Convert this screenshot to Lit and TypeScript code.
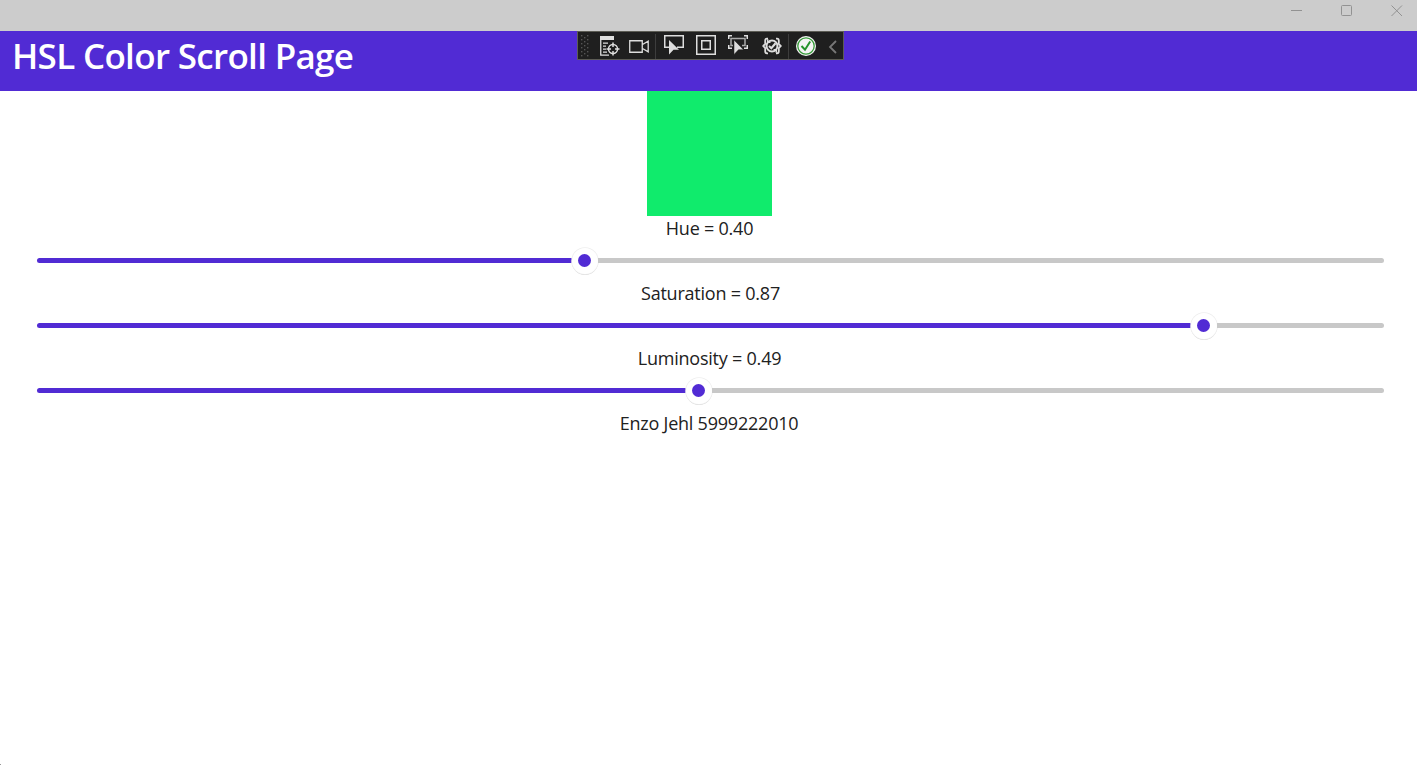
import { LitElement, html, css, svg } from "lit";
import { customElement, property } from "lit/decorators.js";

@customElement("hsl-slider")
class HslSlider extends LitElement {
  @property({ type: Number }) filled = 0;

  static styles = css`
    :host { display: flex; height: 40px; padding: 0 33px 0 37px; box-sizing: border-box; }
    .track { display: flex; align-items: center; width: 100%; height: 39px; }
    .fill { flex: none; height: 5px; border-radius: 2.5px 1px 1px 2.5px; background: #512bd4; }
    .rest { flex: 1; height: 5px; border-radius: 0 2.5px 2.5px 0; background: #c8c8c8; }
    .thumb { flex: none; width: 26px; height: 26px; border-radius: 50%; background: #fff; display: flex; align-items: center; justify-content: center; box-shadow: 0 0 0 0.8px #eeeeee, 0 1px 0 0 #d0d0d0; }
    .dot { width: 13px; height: 13px; border-radius: 50%; background: #512bd4; margin-right: 1px; }
  `;

  render() {
    return html`<div class="track">
      <div class="fill" style="width:${this.filled}px"></div>
      <div class="thumb"><div class="dot"></div></div>
      <div class="rest"></div>
    </div>`;
  }
}

@customElement("debug-toolbar")
class DebugToolbar extends LitElement {
  static styles = css`
    :host { display: flex; box-sizing: border-box; width: 267px; height: 29px; background: #1f1f1f; border: 1px solid #5c5c55; }
    svg { display: block; flex: none; fill: none; stroke: #dedede; stroke-width: 1.5; margin-top: 4px; }
    .grip { margin: 2px 11px 0 3px; stroke: none; fill: #555; }
    .camera { margin-left: 9px; }
    .sep { width: 1px; height: 25px; margin-top: 2px; background: #3d3d3d; }
    .first { margin-left: 6px; }
    .last { margin-left: 6px; }
    .pick, .frame, .track { margin-top: 3px; }
    .pick { margin-left: 8px; }
    .frame, .track { margin-left: 12px; }
    .reload { margin-left: 14px; }
    .ok { margin-left: 7px; }
    .chev { margin-left: 12px; stroke: #777; }
  `;

  render() {
    const dots = [];
    for (let row = 0; row < 6; row++) {
      dots.push(svg`<rect x="0" y=${row * 4 + 1} width="1.4" height="1.4"/><rect x="6" y=${row * 4 + 1} width="1.4" height="1.4"/>`);
      if (row < 5) dots.push(svg`<rect x="3" y=${row * 4 + 3} width="1.4" height="1.4"/>`);
    }
    return html`
      <svg class="grip" width="8" height="24">${dots}</svg>
      <svg class="tree" width="20" height="20" viewBox="0 0 20 20">
        <path d="M0 0H14V4H0Z" fill="#dedede" stroke="none"/>
        <path d="M.75 3V19.2H9M3 7.2H8M3 10.2H6M3 13.2H6M3 16.2H7" stroke-width="1.3"/>
        <circle cx="13" cy="13" r="4.5"/><path d="M13 6.5V11M13 15V19.5M6.5 13H11M15 13H19.5"/>
      </svg>
      <svg class="camera" width="20" height="20" viewBox="0 0 20 20">
        <path d="M.75 4.75H13.25V16.25H.75ZM13.5 8.5L19.2 5.2V15.8L13.5 12.5" stroke-width="1.3"/>
      </svg>
      <div class="sep first"></div>
      <svg class="pick" width="20" height="20" viewBox="0 0 20 20">
        <path d="M5 12.25H.75V.75H19.25V12.25H13"/>
        <path d="M5 5L15 14.7H9.5L5 19.5Z" fill="#dedede" stroke="none"/>
      </svg>
      <svg class="frame" width="20" height="20" viewBox="0 0 20 20">
        <path d="M.75 .75H19.25V19.25H.75ZM5.75 5.75H14.25V14.25H5.75Z"/>
      </svg>
      <svg class="track" width="20" height="20" viewBox="0 0 20 20">
        <path d="M.75 4V.75H4M16 .75H19.25V4M.75 10V13.25H4M19.25 10V13.25H16"/>
        <path d="M5 10.5H3V3.5H17V10.5H14" stroke="#aaa"/>
        <path d="M6 5L15.5 14.7H10.5L6 19.5Z" fill="#dedede" stroke="#1f1f1f" stroke-width=".5"/>
      </svg>
      <svg class="reload" width="20" height="20" viewBox="0 0 20 20">
        <path d="M6 2.7H5Q3.2 2.7 3.2 4.7V8L1.2 10L3.2 12V15.3Q3.2 17.3 5 17.3H6M14 2.7H15Q16.8 2.7 16.8 4.7V8L18.8 10L16.8 12V15.3Q16.8 17.3 15 17.3H14" stroke-width="1.8"/>
        <circle cx="10" cy="10" r="5.5" stroke-width="2"/>
        <path d="M7 10L9.3 12.2L13.6 7.2" stroke-width="2.1"/>
        <path d="M5.7 3.2V6.2H8.5M14.3 16.8V13.8H11.5" stroke-width="1.5"/>
      </svg>
      <div class="sep last"></div>
      <svg class="ok" width="20" height="20" viewBox="0 0 20 20">
        <circle cx="10" cy="10" r="10" fill="#f4f4f4" stroke="none"/>
        <circle cx="10" cy="10" r="8.2" stroke="#379b3a" stroke-width="1.3"/>
        <path d="M5.5 10L9 13.7L14.2 5.5" stroke="#25932b" stroke-width="2"/>
      </svg>
      <svg class="chev" width="9" height="20" viewBox="0 0 9 20"><path d="M8 5L2 11L8 17" stroke-width="1.8"/></svg>
    `;
  }
}

@customElement("app-root")
class AppRoot extends LitElement {
  static styles = css`
    :host { display: flex; flex-direction: column; position: relative; height: 765px; overflow: hidden; background: #fff; font-family: "Open Sans", "Noto Sans", sans-serif; color: #212121; }
    .titlebar { display: flex; justify-content: flex-end; flex: none; height: 31px; box-sizing: border-box; padding: 5px 14px 0 0; gap: 38px; background: #ccc; }
    .titlebar svg { width: 12px; height: 12px; fill: none; stroke: #929292; }
    .header { flex: none; height: 60px; box-sizing: border-box; padding-left: 12px; background: #512bd4; color: #fff; }
    h1 { margin: 0; font-size: 35px; line-height: 50px; font-weight: 600; letter-spacing: -0.68px; white-space: nowrap; }
    .tools { position: absolute; left: 577px; top: 31px; }
    .swatch { flex: none; align-self: center; width: 125px; height: 125px; margin-left: 2px; background: #10eb6c; }
    .label { flex: none; height: 25px; line-height: 25px; font-size: 18px; letter-spacing: -0.22px; text-align: center; padding-left: 2px; white-space: nowrap; }
    .label.saturation { padding-left: 4px; }
    .label.author { padding-left: 1px; }
    .corner { width: 1px; height: 1px; margin-top: auto; background: #999; }
  `;

  render() {
    return html`
      <div class="titlebar">
        <svg viewBox="0 0 12 12"><path d="M0 5.5H11"/></svg>
        <svg viewBox="0 0 12 12"><rect x=".5" y=".5" width="10" height="10" rx="1"/></svg>
        <svg viewBox="0 0 12 12"><path d="M.5 .5L11 11M11 .5L.5 11"/></svg>
      </div>
      <div class="header"><h1>HSL Color Scroll Page</h1></div>
      <debug-toolbar class="tools"></debug-toolbar>
      <div class="swatch"></div>
      <div class="label">Hue = 0.40</div>
      <hsl-slider .filled=${535}></hsl-slider>
      <div class="label saturation">Saturation = 0.87</div>
      <hsl-slider .filled=${1154}></hsl-slider>
      <div class="label">Luminosity = 0.49</div>
      <hsl-slider .filled=${649}></hsl-slider>
      <div class="label author">Enzo Jehl 5999222010</div>
      <div class="corner"></div>
    `;
  }
}
